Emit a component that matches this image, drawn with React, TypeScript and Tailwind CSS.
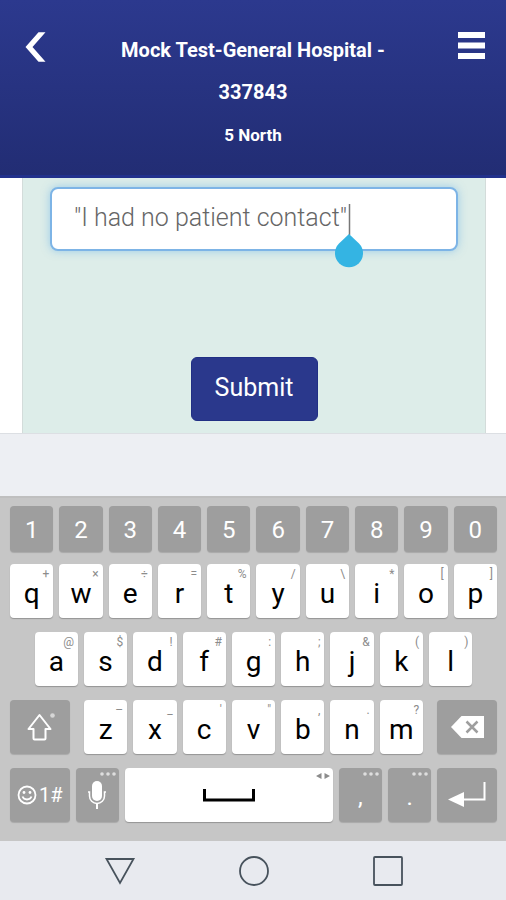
import type { ReactNode } from 'react';

interface LetterKeyProps {
  label: string;
  hint: string;
  className?: string;
}

interface DarkKeyProps {
  label: string;
  className?: string;
  children: ReactNode;
}

const numberKeys = ['1', '2', '3', '4', '5', '6', '7', '8', '9', '0'];

const topRow = [
  ['q', '+'],
  ['w', '×'],
  ['e', '÷'],
  ['r', '='],
  ['t', '%'],
  ['y', '/'],
  ['u', '\\'],
  ['i', '*'],
  ['o', '['],
  ['p', ']'],
];

const homeRow = [
  ['a', '@'],
  ['s', '$'],
  ['d', '!'],
  ['f', '#'],
  ['g', ':'],
  ['h', ';'],
  ['j', '&'],
  ['k', '('],
  ['l', ')'],
];

const bottomRow = [
  ['z', '–'],
  ['x', '_'],
  ['c', "'"],
  ['v', '"'],
  ['b', ','],
  ['n', '.'],
  ['m', '?'],
];

function LetterKey({ label, hint, className = '' }: LetterKeyProps) {
  return (
    <button
      type="button"
      aria-label={label}
      className={`relative col-span-6 mx-[3px] flex h-[54px] items-center justify-center rounded bg-white pt-1.5 text-[28px] leading-8 text-black shadow-[0_1px_1px_rgba(0,0,0,0.25)] ${className}`}
    >
      {label}
      <span className="absolute right-1 top-0.5 text-xs text-[#8c8c8c]">{hint}</span>
    </button>
  );
}

function DarkKey({ label, className = '', children }: DarkKeyProps) {
  return (
    <button
      type="button"
      aria-label={label}
      className={`relative mx-[3px] flex items-center justify-center rounded bg-[#9e9e9e] text-2xl text-white shadow-[0_1px_1px_rgba(0,0,0,0.15)] ${className}`}
    >
      {children}
    </button>
  );
}

function MoreDots() {
  return (
    <svg viewBox="0 0 16 4" className="absolute right-[3px] top-1 h-1 w-4 fill-[#dedede]" aria-hidden="true">
      <circle cx="2" cy="2" r="1.8" />
      <circle cx="8" cy="2" r="1.8" />
      <circle cx="14" cy="2" r="1.8" />
    </svg>
  );
}

function Header() {
  return (
    <header className="flex h-[178px] items-start justify-between border-b-[3px] border-[#22318c] bg-gradient-to-b from-[#2c398e] to-[#222d74] px-5 pt-7 text-white">
      <button type="button" aria-label="Back" className="flex h-9 w-8 items-center justify-center">
        <svg viewBox="0 0 32 36" className="h-9 w-8" fill="currentColor">
          <path d="M18.500 4.200H25.500L12.500 19 25.500 33.800H18.500L5.500 19Z" />
        </svg>
      </button>
      <div className="w-72 pt-px text-center font-bold">
        <h1 className="text-xl leading-[42px]">Mock Test-General Hospital - 337843</h1>
        <p className="text-[17px] leading-[44px]">5 North</p>
      </div>
      <button type="button" aria-label="Menu" className="flex h-9 w-8 items-center justify-center">
        <svg viewBox="0 0 32 36" className="h-9 w-8" fill="currentColor">
          <rect x="4" y="4" width="27" height="6" />
          <rect x="4" y="14.500" width="27" height="6" />
          <rect x="4" y="25" width="27" height="6" />
        </svg>
      </button>
    </header>
  );
}

function ContactForm() {
  return (
    <main className="flex flex-1 flex-col bg-white pl-[22px] pr-5">
      <form className="flex flex-1 flex-col items-center border-x border-[#d3dcda] bg-[#ddede9] px-[27px] pb-3 pt-[9px]">
        <div className="relative w-full">
          <textarea
            aria-label="Comment"
            rows={1}
            defaultValue={'"I had no patient contact"'}
            className="block h-16 w-full resize-none overflow-hidden rounded-lg border-2 border-[#7db4e6] bg-white px-[22px] py-[14px] text-[25px] font-light leading-[30px] text-[#666] shadow-[0_0_8px_rgba(90,170,230,0.5)] outline-none"
          />
          {/* text cursor and its drag handle */}
          <svg viewBox="0 0 28 66" className="absolute left-[285px] top-4 h-[66px] w-7" aria-hidden="true">
            <path d="M14.500 1v31" stroke="#777" strokeWidth="1.500" />
            <path d="M14 31 24 40.500A14 14 0 1 1 4 40.500Z" fill="#34b4e3" />
          </svg>
        </div>
        <button
          type="submit"
          className="mt-auto h-16 w-[127px] rounded-md border border-[#202f84] bg-[#2a388c] pb-0.5 text-[25px] text-white"
        >
          Submit
        </button>
      </form>
    </main>
  );
}

function Keyboard() {
  return (
    <section aria-label="Keyboard" className="border-t-2 border-[#bfbfbf] bg-[#c6c6c6] pb-[19px] pl-[7px] pr-1.5 pt-2">
      <div className="grid grid-cols-60">
        {numberKeys.map((n) => (
          <DarkKey key={n} label={n} className="col-span-6 h-[46px] pt-0.5">
            {n}
          </DarkKey>
        ))}
      </div>

      <div className="mt-3 grid grid-cols-60 gap-y-3.5">
        {topRow.map(([label, hint]) => (
          <LetterKey key={label} label={label} hint={hint} />
        ))}

        {homeRow.map(([label, hint], i) => (
          <LetterKey key={label} label={label} hint={hint} className={i === 0 ? 'col-start-4' : ''} />
        ))}

        <DarkKey label="Shift" className="col-span-8 col-start-1 h-[54px]">
          <svg viewBox="0 0 32 32" className="h-8 w-8" fill="none" stroke="currentColor" strokeWidth="2">
            <path d="M15.500 4 26.500 18h-5v9.500a1 1 0 0 1-1 1h-10a1 1 0 0 1-1-1V18h-5L15.500 4Z" strokeLinejoin="round" />
            <circle cx="28.500" cy="4.500" r="2.300" fill="#d6d6d6" stroke="none" />
          </svg>
        </DarkKey>
        {bottomRow.map(([label, hint], i) => (
          <LetterKey key={label} label={label} hint={hint} className={i === 0 ? 'col-start-10' : ''} />
        ))}
        <DarkKey label="Backspace" className="col-span-8 col-start-53 h-[54px]">
          <svg viewBox="0 0 34 24" className="h-6 w-[34px]">
            <path d="M1 12 11.500 1H34v22H11.500Z" fill="white" />
            <path d="m16.500 6.500 11 11m0-11-11 11" stroke="#9e9e9e" strokeWidth="2.500" />
          </svg>
        </DarkKey>

        <DarkKey label="Emoji and symbols" className="col-span-8 h-[54px] gap-0.5">
          <svg viewBox="0 0 20 20" className="h-5 w-5" fill="none" stroke="currentColor" strokeWidth="1.800">
            <circle cx="10" cy="10" r="8.500" />
            <path d="M5.500 11.500c1.500 4 7.500 4 9 0" />
            <circle cx="7" cy="7.500" r="1.400" fill="currentColor" stroke="none" />
            <circle cx="13" cy="7.500" r="1.400" fill="currentColor" stroke="none" />
          </svg>
          <span className="text-xl">1#</span>
        </DarkKey>
        <DarkKey label="Voice input" className="col-span-6 h-[54px]">
          <MoreDots />
          <svg viewBox="0 0 20 30" className="h-[30px] w-5" fill="none" stroke="currentColor" strokeWidth="1.500">
            <rect x="5" y="1" width="10" height="20" rx="5" fill="currentColor" stroke="none" />
            <path d="M1 12h1.500v4a7.500 7.500 0 0 0 15 0v-4H19" />
            <path d="M10 23.500V29" strokeWidth="2" />
          </svg>
        </DarkKey>
        <button
          type="button"
          aria-label="Space"
          className="relative col-span-26 mx-[3px] flex h-[54px] items-center justify-center rounded bg-white shadow-[0_1px_1px_rgba(0,0,0,0.25)]"
        >
          <svg viewBox="0 0 52 14" className="h-3.5 w-[52px]" fill="none" stroke="black" strokeWidth="3">
            <path d="M1.500 1v11h49V1" />
          </svg>
          <svg viewBox="0 0 14 8" className="absolute right-[3px] top-1 h-2 w-3.5 fill-[#8c8c8c]" aria-hidden="true">
            <path d="M0 4 5.500 1v6ZM14 4 8.500 1v6Z" />
          </svg>
        </button>
        <DarkKey label="Comma" className="col-span-6 h-[54px] pt-1">
          <MoreDots />
          ,
        </DarkKey>
        <DarkKey label="Period" className="col-span-6 h-[54px] pt-1">
          <MoreDots />
          .
        </DarkKey>
        <DarkKey label="Enter" className="col-span-8 h-[54px]">
          <svg viewBox="0 0 40 28" className="h-7 w-10">
            <path d="M37.500 1v17.500H15" fill="none" stroke="white" strokeWidth="2" />
            <path d="M1 18.500 17 11v15Z" fill="white" />
          </svg>
        </DarkKey>
      </div>
    </section>
  );
}

function SystemNav() {
  return (
    <nav
      aria-label="System"
      className="flex h-[59px] items-center justify-center gap-[102px] bg-[#e8eaef] pl-px text-[#47525c]"
    >
      <button type="button" aria-label="Back">
        <svg viewBox="0 0 32 32" className="h-8 w-8" fill="none" stroke="currentColor" strokeWidth="1.800">
          <path d="M2.500 4h27L16 28Z" />
        </svg>
      </button>
      <button type="button" aria-label="Home">
        <svg viewBox="0 0 32 32" className="h-8 w-8" fill="none" stroke="currentColor" strokeWidth="1.800">
          <circle cx="16" cy="16" r="14" />
        </svg>
      </button>
      <button type="button" aria-label="Recent apps">
        <svg viewBox="0 0 32 32" className="h-8 w-8" fill="none" stroke="currentColor" strokeWidth="1.800">
          <rect x="2" y="2" width="28" height="28" rx="1" />
        </svg>
      </button>
    </nav>
  );
}

export default function App() {
  return (
    <div className="flex min-h-screen flex-col bg-white font-[Roboto,sans-serif]">
      <Header />
      <ContactForm />
      <div className="h-[63px] border-t border-[#dcdfe3] bg-[#edeff3]" />
      <Keyboard />
      <SystemNav />
    </div>
  );
}
